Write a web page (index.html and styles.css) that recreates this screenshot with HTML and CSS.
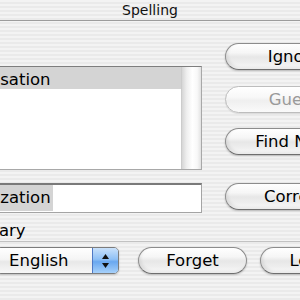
FILE: index.html
```html
<!DOCTYPE html>
<html lang="en">
<head>
  <meta charset="UTF-8">
  <meta name="viewport" content="width=device-width, initial-scale=1.0">
  <title>Spelling</title>
  <link rel="stylesheet" href="styles.css">
</head>
<body>
  <div class="window">
    <div class="titlebar">Spelling</div>

    <div class="panel">
      <div class="left">
        <div class="guesses">
          <ul class="rows">
            <li class="selected">organisation</li>
          </ul>
          <div class="scroll"></div>
        </div>
        <div class="field"><span class="sel">organization</span></div>
        <div class="dict-label">Dictionary</div>
      </div>

      <div class="right">
        <button class="btn ignore">Ignore</button>
        <button class="btn guess" disabled>Guess</button>
        <button class="btn find">Find Next</button>
        <button class="btn correct">Correct</button>
      </div>
    </div>

    <div class="separator"></div>

    <div class="bottom">
      <div class="popup">
        <span class="popup-label">English</span>
        <span class="popup-arrows">
          <svg width="9" height="16" viewBox="0 0 9 16">
            <path d="M4.5 1 L8 6 L1 6 Z" fill="#111"/>
            <path d="M1 10 L8 10 L4.5 15 Z" fill="#111"/>
          </svg>
        </span>
      </div>
      <button class="btn forget">Forget</button>
      <button class="btn learn">Learn</button>
    </div>
  </div>
</body>
</html>
```

FILE: styles.css
```css
html, body {
  margin: 0;
  height: 100%;
}
body {
  font-family: 'DejaVu Sans', 'Liberation Sans', sans-serif;
  color: #000;
  overflow: hidden;
  background: repeating-linear-gradient(to bottom, #f3f3f3 0, #f3f3f3 2px, #eaeaea 2px, #eaeaea 4px);
}
.window {
  width: 300px;
  height: 300px;
  overflow: hidden;
}
.titlebar {
  height: 21px;
  padding-top: 1px;
  box-sizing: border-box;
  border-bottom: 1px solid #9c9c9c;
  text-align: center;
  font-size: 14px;
  line-height: 19px;
  color: #111;
}

.panel {
  display: grid;
  grid-template-columns: 258px 138px;
  column-gap: 23px;
  margin-left: -56px;
}

/* guess list */
.guesses {
  display: flex;
  margin-top: 45px;
  height: 104px;
  box-sizing: border-box;
  border: 1px solid #a8a8a8;
  border-top-color: #7e7e7e;
  background: #fff;
}
.rows {
  flex: 1;
  list-style: none;
  margin: 0;
  padding: 0;
  font-size: 16.5px;
}
.rows li {
  height: 22px;
  line-height: 26px;
  padding-left: 3px;
}
.rows li.selected {
  background: #d4d4d4;
}
.scroll {
  width: 19px;
  background: linear-gradient(to right, #d6d6d6 0%, #efefef 25%, #ffffff 55%, #f8f8f8 80%, #e2e2e2 100%);
  border-left: 1px solid #cccccc;
}

.field {
  margin-top: 13px;
  height: 30px;
  box-sizing: border-box;
  border: 1px solid #a4a4a4;
  border-top: 2px solid #7a7a7a;
  background: #fff;
  padding-left: 3px;
  font-size: 16.5px;
}
.field .sel {
  display: inline-block;
  background: #d4d4d4;
  line-height: 26px;
  padding-right: 2px;
}

.dict-label {
  margin-top: 8px;
  margin-left: -3px;
  font-size: 16.5px;
  line-height: 19px;
}

/* buttons */
.btn {
  display: block;
  flex: none;
  width: 100%;
  height: 27px;
  box-sizing: border-box;
  padding: 0;
  border: 1px solid #8c8c8c;
  border-bottom-color: #6e6e6e;
  border-radius: 14px;
  background: linear-gradient(to bottom, #ffffff 0%, #f6f6f6 35%, #e7e7e7 52%, #eeeeee 75%, #fbfbfb 100%);
  box-shadow: 0 1px 2px rgba(0, 0, 0, 0.22), inset 2px -2px 3px rgba(0, 0, 0, 0.07);
  font-family: 'DejaVu Sans', 'Liberation Sans', sans-serif;
  font-size: 16.5px;
  line-height: 25px;
  color: #000;
  text-align: center;
  white-space: nowrap;
}
.right .ignore { margin-top: 22px; }
.right .guess { margin-top: 16px; }
.right .find { margin-top: 15px; }
.right .correct { margin-top: 28px; }
.btn:disabled {
  color: #9a9a9a;
  border-color: #bdbdbd;
  box-shadow: 0 1px 1px rgba(0, 0, 0, 0.1);
  background: linear-gradient(to bottom, #ffffff 0%, #f8f8f8 40%, #efefef 55%, #fafafa 100%);
}

.separator {
  margin-top: 1px;
  height: 1px;
  background: #c2c2c2;
}

/* bottom row */
.bottom {
  display: flex;
  align-items: flex-start;
  margin-top: 5px;
  margin-left: -4px;
}
.popup {
  display: flex;
  flex: none;
  width: 123px;
  height: 27px;
  box-sizing: border-box;
  border: 1px solid #7c7c7c;
  border-radius: 5px;
  box-shadow: 0 1px 2px rgba(0, 0, 0, 0.2);
  overflow: hidden;
  font-size: 16.5px;
}
.popup-label {
  flex: 1;
  padding-left: 12px;
  line-height: 25px;
  background: linear-gradient(to bottom, #ffffff 0%, #f5f5f5 45%, #e8e8e8 55%, #f7f7f7 100%);
}
.popup-arrows {
  display: flex;
  align-items: center;
  justify-content: center;
  width: 25px;
  border-left: 1px solid #4f78c4;
  background: linear-gradient(to bottom, #c9e1fb 0%, #8fc0f5 45%, #6aa8f0 55%, #a6d0fa 100%);
}
.forget {
  width: 109px;
  margin-left: 19px;
}
.learn {
  width: 105px;
  margin-left: 13px;
}
```
